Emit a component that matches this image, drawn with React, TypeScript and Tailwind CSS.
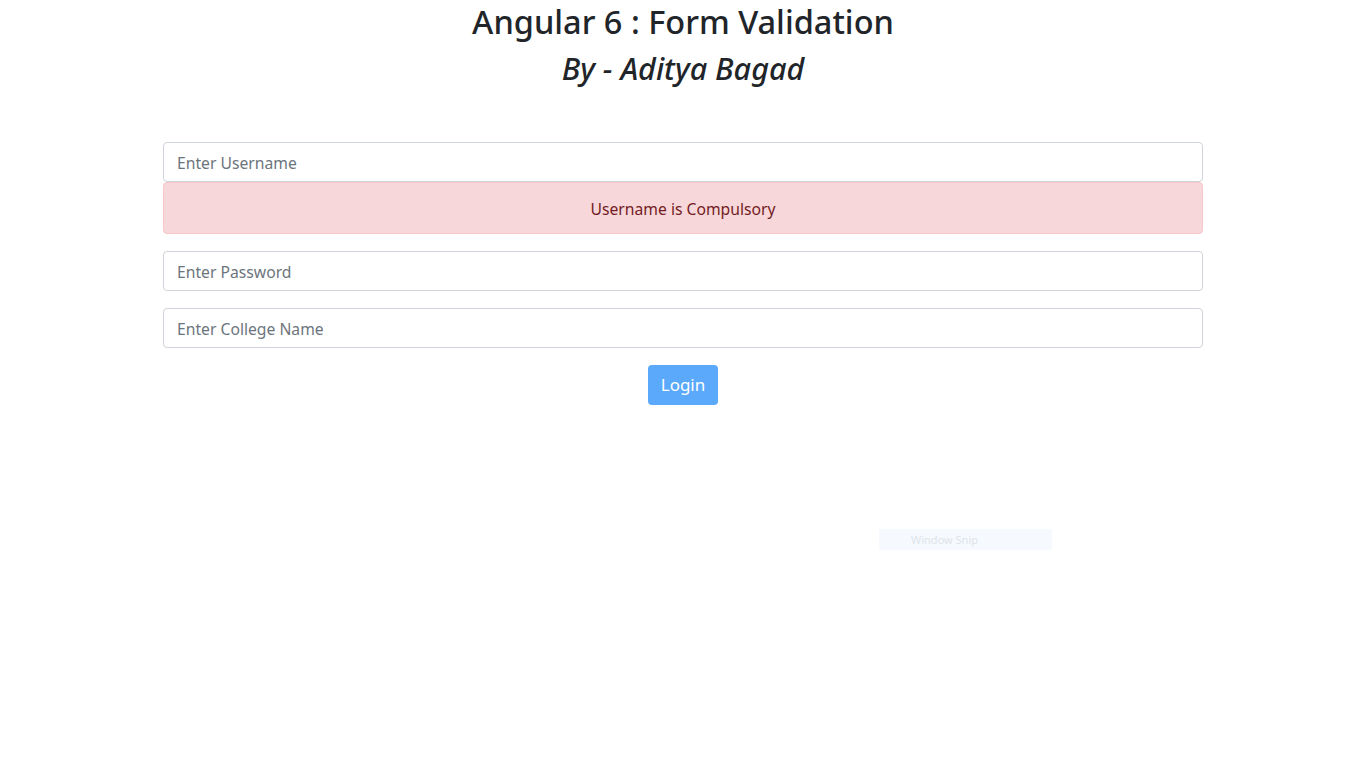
import React from "react";

const font = { fontFamily: '"Noto Sans", "Open Sans", sans-serif' };

const Field = ({ placeholder }: { placeholder: string }) => (
  <input
    type="text"
    placeholder={placeholder}
    className="block w-full h-[40px] px-[13px] pt-[1px] border border-[#ced4da] rounded-[4px] text-[15.7px] text-[#495057] placeholder:text-[#6c757d] bg-white outline-none"
  />
);

export default function App() {
  return (
    <div className="relative min-h-[768px] bg-white text-[#212529]" style={font}>
      {/* Heading */}
      <div className="flex flex-col items-center">
        <h1 className="text-[32.5px] font-medium leading-[44px] mt-0">Angular 6 : Form Validation</h1>
        <h3 className="text-[30.5px] font-medium italic leading-[48px]">By - Aditya Bagad</h3>
      </div>

      {/* Form */}
      <form className="w-[1040px] mx-auto mt-[50px]">
        <div className="mb-[17px]">
          <Field placeholder="Enter Username" />
          <div className="h-[52px] pt-[3px] flex items-center justify-center bg-[#f8d7da] border border-[#f5c6cb] rounded-[4px] text-[15.7px] text-[#721c24]">
            Username is Compulsory
          </div>
        </div>
        <div className="mb-[17px]">
          <Field placeholder="Enter Password" />
        </div>
        <div className="mb-[17px]">
          <Field placeholder="Enter College Name" />
        </div>
        <div className="flex justify-center">
          <button
            type="button"
            className="w-[70px] h-[40px] rounded-[4px] bg-[#5aa9fb] text-white text-[17px]"
          >
            Login
          </button>
        </div>
      </form>

      {/* leftover snip overlay */}
      <div className="absolute left-[879px] top-[529px] w-[173px] h-[21px] bg-[#f6faff] pl-[32px] text-[11px] leading-[21px] text-[#dfe3e8]">
        Window Snip
      </div>
    </div>
  );
}
